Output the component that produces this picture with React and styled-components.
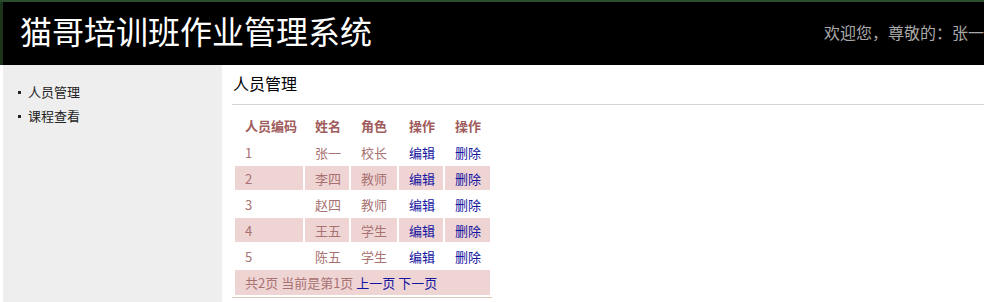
import React from "react";
import styled, { createGlobalStyle } from "styled-components";

const GlobalStyle = createGlobalStyle`
  html, body {
    margin: 0;
    padding: 0;
    background: #ffffff;
    font-family: "Liberation Sans", "Noto Sans CJK SC", sans-serif;
    overflow: hidden;
  }
`;

const columns = [
  { label: "人员编码", width: 68 },
  { label: "姓名", width: 44 },
  { label: "角色", width: 46 },
  { label: "操作", width: 44 },
  { label: "操作", width: 45 },
];

const users = [
  { id: 1, name: "张一", role: "校长" },
  { id: 2, name: "李四", role: "教师" },
  { id: 3, name: "赵四", role: "教师" },
  { id: 4, name: "王五", role: "学生" },
  { id: 5, name: "陈五", role: "学生" },
];

const App = () => {
  return (
    <>
      <GlobalStyle />
      <Page>
        <Header>
          <Title>猫哥培训班作业管理系统</Title>
          <Welcome>欢迎您，尊敬的：张一</Welcome>
        </Header>
        <Body>
          <Sidebar>
            <Menu>
              <MenuItem>人员管理</MenuItem>
              <MenuItem>课程查看</MenuItem>
            </Menu>
          </Sidebar>
          <Main>
            <PageTitle>人员管理</PageTitle>
            <Divider />
            <Table>
              <thead>
                <tr>
                  {columns.map((c, i) => (
                    <Th key={i} $w={c.width}>{c.label}</Th>
                  ))}
                </tr>
              </thead>
              <tbody>
                {users.map((u, i) => (
                  <Row key={u.id} $striped={i % 2 === 1}>
                    <Td>{u.id}</Td>
                    <Td>{u.name}</Td>
                    <Td>{u.role}</Td>
                    <Td><Link>编辑</Link></Td>
                    <Td><Link>删除</Link></Td>
                  </Row>
                ))}
                <Row $striped>
                  <Td colSpan={5} $h={25}>
                    共2页 当前是第1页 <Link>上一页</Link> <Link>下一页</Link>
                  </Td>
                </Row>
              </tbody>
            </Table>
            <TableRule />
          </Main>
        </Body>
      </Page>
    </>
  );
};

export default App;

const Page = styled.div`
  width: 984px;
  height: 302px;
  border-top: 2px solid #2b4d2b;
  box-sizing: border-box;
  overflow: hidden;
`;

const Header = styled.header`
  height: 63px;
  background: #000000;
  border-left: 3px solid #1c331c;
  display: flex;
  align-items: center;
  justify-content: space-between;
  white-space: nowrap;
  overflow: hidden;
`;

const Title = styled.h1`
  margin: -8px 0 0 17px;
  font-family: "Noto Sans CJK SC", sans-serif;
  font-weight: 400;
  font-size: 32px;
  line-height: 1;
  color: #ffffff;
`;

const Welcome = styled.span`
  margin-top: -4px;
  font-family: "Noto Sans CJK SC", sans-serif;
  font-size: 16px;
  line-height: 1;
  color: #a9a9a9;
  flex-shrink: 0;
`;

const Body = styled.div`
  display: flex;
  height: 237px;
`;

const Sidebar = styled.aside`
  width: 219px;
  margin-left: 3px;
  background: #eeeeee;
`;

const Menu = styled.ul`
  margin: 15px 0 0;
  padding-left: 25px;
  list-style: none;
  font-family: "Noto Sans CJK SC", sans-serif;
  font-size: 13px;
  line-height: 24px;
  color: #222222;
`;

const MenuItem = styled.li`
  position: relative;

  &::before {
    content: "";
    position: absolute;
    left: -10px;
    top: 11px;
    width: 3px;
    height: 3px;
    background: #222222;
  }
`;

const Main = styled.main`
  flex: 1;
  padding-left: 10px;
`;

const PageTitle = styled.h2`
  margin: 6px 0 0 1px;
  font-family: "Noto Sans CJK SC", sans-serif;
  font-weight: 400;
  font-size: 16px;
  line-height: 24px;
  color: #000000;
`;

const Divider = styled.div`
  margin-top: 9px;
  height: 1px;
  background: #d4d4d4;
`;

const Table = styled.table`
  margin: 6px 0 0 1px;
  border-spacing: 2px;
  table-layout: fixed;
  font-family: "Noto Sans CJK SC", sans-serif;
  font-size: 13px;
`;

const Row = styled.tr`
  background: ${(p) => (p.$striped ? "#efd4d4" : "transparent")};
`;

const Th = styled.th`
  box-sizing: border-box;
  width: ${(p) => p.$w}px;
  height: 25px;
  padding: 0 0 0 10px;
  text-align: left;
  font-weight: 700;
  color: #a05c5c;
  white-space: nowrap;
`;

const Td = styled.td`
  box-sizing: border-box;
  height: ${(p) => p.$h || 24}px;
  padding: 0 0 0 10px;
  text-align: left;
  color: #a87272;
  white-space: nowrap;
`;

const Link = styled.a`
  color: #1414a0;
  cursor: pointer;
`;

const TableRule = styled.div`
  width: 260px;
  height: 1px;
  background: #dcc9b8;
`;
